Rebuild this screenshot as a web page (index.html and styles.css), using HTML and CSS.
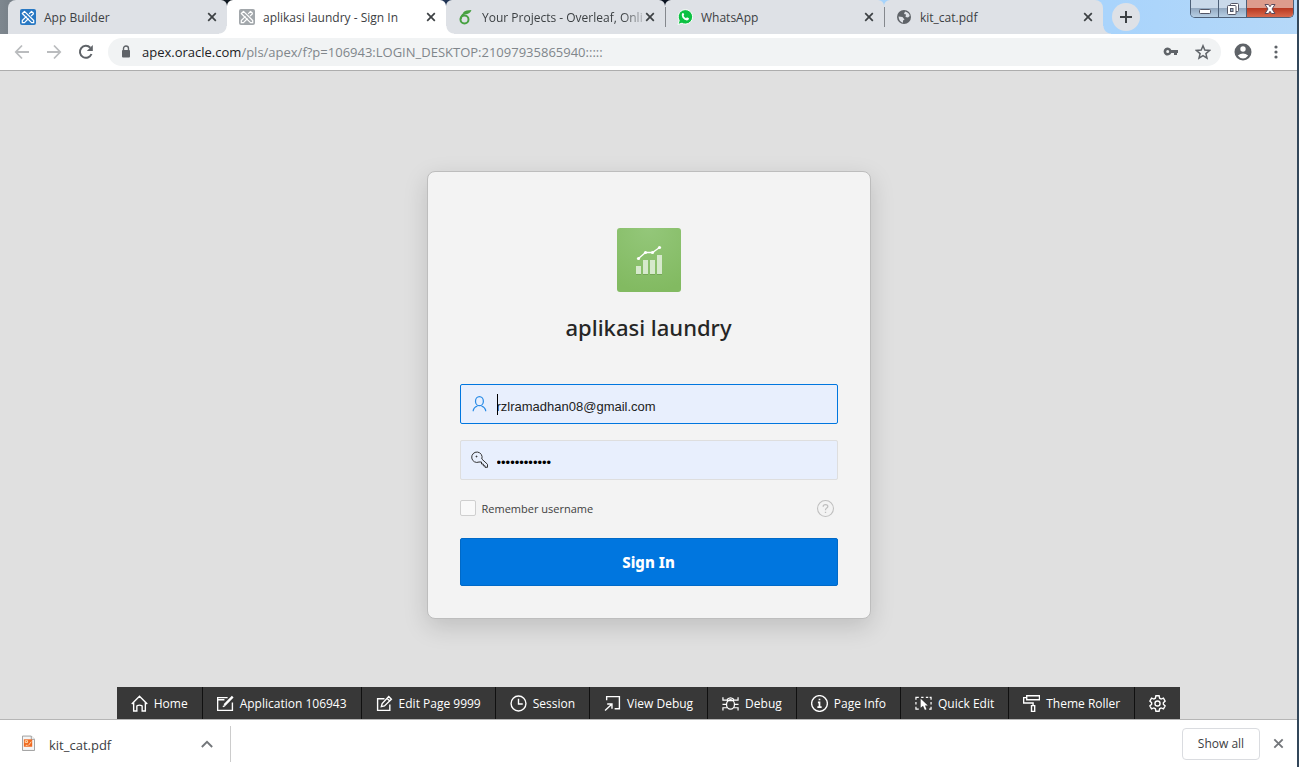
FILE: index.html
```html
<!DOCTYPE html>
<html lang="en">
<head>
<meta charset="utf-8">
<title>aplikasi laundry - Sign In</title>
<link rel="stylesheet" href="styles.css">
</head>
<body>
<svg class="defs" aria-hidden="true">
  <symbol id="apex" viewBox="0 0 16 16"><rect width="16" height="16" rx="2"/><g fill="none" stroke="#fff" stroke-width="1.2" stroke-linejoin="round"><path d="M2.300 4.500 4.500 2.300 13.700 11.500V13.700H11.500Z"/><path d="M13.700 4.500 11.500 2.300 9.200 4.800M6.500 7.300 2.300 11.500V13.700H4.500L8.500 9.500M11 7.200 13.700 4.500"/></g></symbol>
  <symbol id="close" viewBox="0 0 10 10"><path d="M1.200 1.200 8.800 8.800M8.800 1.200 1.200 8.800" fill="none" stroke="currentColor" stroke-width="1.700"/></symbol>
</svg>
<header class="tabstrip">
  <div class="tab tab-first"><svg class="favicon blue"><use href="#apex"/></svg><span class="tab-label">App Builder</span><button class="tab-close" aria-label="Close App Builder"><svg><use href="#close"/></svg></button></div>
  <div class="tab active"><svg class="favicon gray"><use href="#apex"/></svg><span class="tab-label">aplikasi laundry - Sign In</span><button class="tab-close" aria-label="Close aplikasi laundry"><svg><use href="#close"/></svg></button></div>
  <div class="tab"><svg class="favicon" viewBox="0 0 16 16" fill="none" stroke="#47a141"><circle cx="6.500" cy="10.500" r="4" stroke-width="2"/><path d="M2.700 10C3 6.500 6 4 9 3.400" stroke-width="2"/><path d="M5 3.800C7 1.200 10 1.200 13.500 1 12.500 4.500 9 5.500 6.500 5.200Z" fill="#47a141" stroke="none"/></svg><span class="tab-label fade">Your Projects - Overleaf, Onli</span><button class="tab-close" aria-label="Close Your Projects"><svg><use href="#close"/></svg></button></div>
  <div class="tab divided"><svg class="favicon" viewBox="0 0 16 16"><path d="M1 15.500 2.200 11.500A7.200 7.200 0 1 1 5 14.200Z" fill="#0dc143" stroke="#fff"/><path d="M5.200 4.200Q6.300 3.400 6.800 4.600L7.200 5.700 6.500 6.800Q7.300 8.500 9 9.300L10 8.300 12 9.300Q12 11.200 10 11.500 7.500 11.300 5.500 8.800 3.800 6.300 5.200 4.200Z" fill="#fff"/></svg><span class="tab-label">WhatsApp</span><button class="tab-close" aria-label="Close WhatsApp"><svg><use href="#close"/></svg></button></div>
  <div class="tab divided tab-last"><svg class="favicon" viewBox="0 0 16 16"><circle cx="8" cy="8" r="7" fill="#5f6368"/><path d="M2.500 7.500 6.500 8 8.500 10.500 7 11.500 7 13.700Q3 12.800 2.500 7.500ZM9 2.500 8 5 10 5.500 9.500 8 12 8.500 13.700 7Q13.500 3.500 9 2.500Z" fill="#dee1e6"/></svg><span class="tab-label">kit_cat.pdf</span><button class="tab-close" aria-label="Close kit_cat.pdf"><svg><use href="#close"/></svg></button></div>
  <button class="new-tab" aria-label="New tab"><svg viewBox="0 0 12 12"><path d="M6 0V12M0 6H12" stroke="#3c4043" stroke-width="2"/></svg></button>
  <div class="window-buttons">
    <button class="win" aria-label="Minimize"><svg viewBox="0 0 14 14"><rect x="1.500" y="7.500" width="11" height="4" rx="1" fill="#fff" stroke="#535666"/></svg></button>
    <button class="win" aria-label="Restore"><svg viewBox="0 0 14 14"><g fill="#fff" stroke="#535666"><rect x="4.500" y="1.500" width="8" height="8" rx="1"/><rect x="1.500" y="3.500" width="8.500" height="9" rx="1"/><rect x="4.500" y="6.500" width="2.500" height="3" fill="#9bb4cc"/></g></svg></button>
    <button class="win win-close" aria-label="Close window"><svg viewBox="0 0 14 14"><path d="M2 2.500H5.500L7 4.700 8.500 2.500H12L9 7 12 11.500H8.500L7 9.300 5.500 11.500H2L5 7Z" fill="#fff" stroke="#5b4a5c"/></svg></button>
  </div>
</header>
<nav class="toolbar" aria-label="Browser">
  <button class="tool" aria-label="Back"><svg viewBox="0 0 16 16" fill="none" stroke="#babcbe" stroke-width="1.800"><path d="M15 8H2M8 1.500 1.800 8 8 14.500"/></svg></button>
  <button class="tool" aria-label="Forward"><svg viewBox="0 0 16 16" fill="none" stroke="#babcbe" stroke-width="1.800"><path d="M1 8H14M8 1.500 14.200 8 8 14.500"/></svg></button>
  <button class="tool" aria-label="Reload"><svg viewBox="0 0 16 16"><path d="M13.500 10A6 6 0 1 1 12.300 3.700" fill="none" stroke="#5f6368" stroke-width="2"/><path d="M14.800 1V7H8.800Z" fill="#5f6368"/></svg></button>
  <div class="omnibox">
    <svg class="lock" viewBox="0 0 10 14"><path d="M2.500 6V3.500A2.500 2.500 0 0 1 7.500 3.500V6" fill="none" stroke="#5f6368" stroke-width="1.400"/><rect x="1" y="5" width="8" height="7.500" rx="1" fill="#5f6368"/></svg>
    <a class="url" href="#"><span class="host">apex.oracle.com</span>/pls/apex/f?p=106943:LOGIN_DESKTOP:21097935865940:::::</a>
    <button class="tool" aria-label="Passwords"><svg viewBox="0 0 16 16" fill="#5f6368"><path fill-rule="evenodd" d="M8.300 6A4 4 0 1 0 8.300 9H11V11H14V9H15V6ZM4.700 6A1.500 1.500 0 1 1 4.700 9 1.500 1.500 0 0 1 4.700 6Z"/></svg></button>
    <button class="tool" aria-label="Bookmark"><svg viewBox="0 0 16 16"><path d="M8 1.800 9.800 6.100 14.500 6.500 10.900 9.600 12 14.100 8 11.700 4 14.100 5.100 9.600 1.500 6.500 6.200 6.100Z" fill="none" stroke="#5f6368" stroke-width="1.500"/></svg></button>
  </div>
  <button class="tool account" aria-label="Account"><svg viewBox="0 0 18 18"><circle cx="9" cy="9" r="8.500" fill="#5f6368"/><circle cx="9" cy="6" r="2.700" fill="#fff"/><path d="M3.800 12.500Q9 8.300 14.200 12.500 12 15.500 9 15.500 6 15.500 3.800 12.500Z" fill="#fff"/></svg></button>
  <button class="tool" aria-label="Menu"><svg viewBox="0 0 16 16" fill="#5f6368"><circle cx="8" cy="3" r="1.600"/><circle cx="8" cy="8" r="1.600"/><circle cx="8" cy="13" r="1.600"/></svg></button>
</nav>
<main class="page">
  <form class="card">
    <svg class="logo" viewBox="0 0 64 64"><defs><radialGradient id="green" cx=".5" cy="0" r="1"><stop offset="0" stop-color="#94c77a"/><stop offset="1" stop-color="#82ba61"/></radialGradient></defs><rect width="64" height="64" rx="3" fill="url(#green)"/><path d="M19 46.500H24M26 46.500H31M33 46.500H38M40 46.500H45" stroke="#75a757"/><path d="M19 38H24V46H19ZM26 32H31V46H26ZM33 32H38V46H33ZM40 27H45V46H40Z" fill="#d6e9cc"/><path d="M21.500 30.500 28.500 24.500H35.500L42.500 19.500" fill="none" stroke="#fff" stroke-width="1.300"/><g fill="#fff"><circle cx="21.500" cy="30.500" r="1.600"/><circle cx="28.500" cy="24.500" r="1.600"/><circle cx="35.500" cy="24.500" r="1.600"/><circle cx="42.500" cy="19.500" r="1.600"/></g></svg>
    <h1>aplikasi laundry</h1>
    <label class="field focused"><svg viewBox="0 0 16 16" fill="none" stroke="currentColor" stroke-width="1.100"><ellipse cx="7.500" cy="5.500" rx="3.500" ry="4"/><path d="M2 14.500V13.500Q2.500 11 5.700 9.800M13 14.500V13.500Q12.500 11 9.300 9.800"/></svg><input type="text" aria-label="Username" value="rzlramadhan08@gmail.com"><span class="caret"></span></label>
    <label class="field"><svg viewBox="0 0 18 18" fill="none" stroke="currentColor"><path d="M8 11A5.200 5.200 0 1 1 10.800 8L16.500 13.300V16.300H14V14.800H12.300V13H10.500V11Z"/><circle cx="5.500" cy="5.500" r=".5" fill="currentColor"/></svg><input type="password" aria-label="Password" value="abcdefghijkl"></label>
    <div class="remember"><input type="checkbox" id="remember"><label for="remember">Remember username</label><button type="button" class="help" aria-label="Help"><svg viewBox="0 0 16 16" fill="none" stroke="#bfbfbf"><circle cx="8" cy="8" r="7.500"/><path d="M5.800 6.300Q5.800 4.400 8 4.400 10.200 4.400 10.200 6.200 10.200 7.200 8.900 7.800 8 8.300 8 9.700M8 11V12.300" stroke-width="1.200"/></svg></button></div>
    <button type="button" class="signin">Sign In</button>
  </form>
  <div class="devbar">
    <button><svg viewBox="0 0 16 16"><path d="M.7 8.500 8 1.200 15.300 8.500M2.500 7V15H5.500V10.500Q5.500 9.500 8 9.500 10.500 9.500 10.500 10.500V15H13.500V7"/></svg>Home</button>
    <button><svg viewBox="0 0 16 16"><path d="M10 2.500H.6V14.500H14.500V7M.6 4.500H7"/><path d="M14.800 1.500 7 9.500" stroke-width="2.200"/><path d="M5.500 11 7.500 10"/></svg>Application 106943</button>
    <button><svg viewBox="0 0 16 16"><path d="M8 3.500H1.500V14.500H13V9M5 11 5.800 8 12 1.500 14.500 4 8 10.300ZM10.500 3.200 13 5.600"/></svg>Edit Page 9999</button>
    <button><svg viewBox="0 0 16 16"><circle cx="8" cy="8" r="7"/><path d="M8 3.500V8.500H12"/></svg>Session</button>
    <button><svg viewBox="0 0 16 16"><path d="M2.500 5V1.500H14.500V13H10M1 14.500 7.500 8.500M3 8.500H7.500V13"/></svg>View Debug</button>
    <button><svg viewBox="0 0 18 16"><ellipse cx="9" cy="9" rx="4.200" ry="5"/><path d="M5.700 5V3.500Q9 .5 12.300 3.500V5ZM1 1.500V4.500H5M17 1.500V4.500H13M.5 9H4.500M17.500 9H13.500M1 15.500V12.500H5.500M17 15.500V12.500H12.500"/></svg>Debug</button>
    <button><svg viewBox="0 0 16 16"><circle cx="8" cy="8" r="7.400"/><path d="M8 3.500V5M6.500 7H8V11.500M6 11.500H10" stroke-width="1.600"/></svg>Page Info</button>
    <button><svg viewBox="0 0 18 16"><path d="M1 4V1.500H4M6.500 1.500H9M11.500 1.500H14M15.500 1.500H17V4M17 6.500V9M17 11.500V14H15M1 6.500V9M1 11.500V14H4"/><path d="M6 3V12.500L8.500 10.500 10.500 15 12.200 14.200 10.500 10H13.500Z" fill="#fff" stroke="none"/></svg>Quick Edit</button>
    <button><svg viewBox="0 0 16 16"><path d="M3.500.7H15.500V4.500H3.500ZM3.500 2.500H.6V7.500H9.500V10M8 10H11V15.400H8Z"/></svg>Theme Roller</button>
    <button aria-label="Settings"><svg viewBox="0 0 16 16"><path d="M6.500.7H9.500L10 3 11.400 3.800 13.600 3 15.200 5.700 13.500 7.300V8.700L15.200 10.300 13.600 13 11.400 12.200 10 13 9.500 15.300H6.500L6 13 4.600 12.200 2.400 13 .8 10.300 2.500 8.700V7.300L.8 5.700 2.400 3 4.600 3.800 6 3Z"/><circle cx="8" cy="8" r="2.400"/></svg></button>
  </div>
</main>
<footer class="downloads">
  <button class="download"><svg class="file" viewBox="0 0 14 17"><path d="M.5.500H10L13.500 4V16H.5Z" fill="#f5f5f5" stroke="#999"/><path d="M10 .5V4H13.500" fill="#fff" stroke="#999"/><rect x="2" y="4" width="9" height="8" fill="#f06a22"/><path d="M3.500 5.500H6V7.500H3.500ZM7 10.500 10 6.500M4 10.500H6" stroke="#ffe1b5" fill="none"/></svg><span>kit_cat.pdf</span><svg class="chevron" viewBox="0 0 10 10"><path d="M.7 7.500 5 3.200 9.300 7.500" fill="none" stroke="#73767a" stroke-width="1.600"/></svg></button>
  <button class="show-all">Show all</button>
  <button class="dismiss" aria-label="Close downloads"><svg><use href="#close"/></svg></button>
</footer>
</body>
</html>
```
FILE: styles.css
```css
* { box-sizing: border-box; }
body {
  margin: 0;
  min-height: 100vh;
  display: flex;
  flex-direction: column;
  border-right: 2px solid #33475a;
  background: #fff;
  font-family: "Open Sans", "Noto Sans", sans-serif;
  font-size: 12px;
  color: #3c4043;
}
button { font: inherit; color: inherit; border: 0; background: none; padding: 0; }
svg { display: block; flex: none; }
.defs { position: absolute; width: 0; height: 0; }

.tabstrip {
  display: flex;
  height: 34px;
  padding-left: 8px;
  background: linear-gradient(90deg, #7e878f 0, #79828a 8px, #101820 200px, #101820 240px, #1f3354 447px, #0b1220 600px, #0b1220 680px, #a6d3fb 860px, #a9d4fc 1110px, #b5d8f8);
}
.tab {
  position: relative;
  flex: 0 1 219px;
  min-width: 0;
  display: flex;
  align-items: center;
  padding: 0 10px 0 12px;
  border-radius: 6px 6px 0 0;
  background: #dee1e6;
}
.tab-first { border-top-left-radius: 8px; }
.tab-last { border-top-right-radius: 8px; }
.tab.active { background: #fff; z-index: 1; }
.tab.active::before, .tab.active::after, .tab-last::after {
  content: "";
  position: absolute;
  bottom: 0;
  width: 8px;
  height: 8px;
}
.tab.active::before { left: -8px; background: radial-gradient(circle at 0 0, #dee1e6 7px, #fff 8px); }
.tab.active::after { right: -8px; background: radial-gradient(circle at 100% 0, #dee1e6 7px, #fff 8px); }
.tab-last::after { right: -8px; background: radial-gradient(circle at 100% 0, transparent 7px, #dee1e6 8px); }
.divided::before {
  content: "";
  position: absolute;
  left: 0;
  top: 7px;
  width: 1px;
  height: 20px;
  background: #85888d;
}
.favicon { width: 16px; height: 16px; margin-right: 8px; }
.blue { fill: #2878c3; }
.gray { fill: #a2a7ab; }
.tab-label { flex: 1; min-width: 0; white-space: nowrap; }
.fade { -webkit-mask-image: linear-gradient(90deg, #000 86%, rgba(0, 0, 0, .2)); mask-image: linear-gradient(90deg, #000 86%, rgba(0, 0, 0, .2)); }
.tab-close svg { width: 10px; height: 10px; }
.new-tab {
  display: grid;
  place-items: center;
  flex: none;
  width: 28px;
  height: 28px;
  margin: 3px 0 0 9px;
  border-radius: 50%;
  background: #dee1e6;
}
.new-tab svg { width: 12px; height: 12px; }
.window-buttons {
  display: flex;
  flex: none;
  height: 18px;
  margin: 0 3px 0 auto;
  border: 1px solid #4d6078;
  border-top: 0;
  border-radius: 0 0 5px 5px;
  overflow: hidden;
}
.win {
  display: grid;
  place-items: center;
  width: 28px;
  background: linear-gradient(#c9d9ea 50%, #93a9c1 50%, #b7cfe4);
  border-right: 1px solid #4d6078;
}
.win svg { width: 14px; height: 14px; }
.win-close { width: 46px; border: 0; background: linear-gradient(#dd9c8c 45%, #b93a22 50%, #d9694d); }

.toolbar {
  display: flex;
  align-items: center;
  gap: 16px;
  height: 37px;
  padding: 0 13px 0 14px;
  border-bottom: 1px solid #adadad;
}
.tool { flex: none; }
.tool svg { width: 16px; height: 16px; }
.account svg { width: 18px; height: 18px; }
.omnibox {
  flex: 1;
  min-width: 0;
  display: flex;
  align-items: center;
  gap: 16px;
  height: 28px;
  margin: 0 -3px 0 -2px;
  padding: 0 10px 0 12px;
  border-radius: 14px;
  background: #f1f3f4;
  font-size: 13px;
}
.lock { width: 12px; height: 14px; margin-right: -6px; }
.url { flex: 1; min-width: 0; overflow: hidden; white-space: nowrap; color: #80868b; text-decoration: none; }
.host { color: #202124; }

.page {
  position: relative;
  flex: 1;
  display: flex;
  flex-direction: column;
  align-items: center;
  justify-content: center;
  background: #e0e0e0;
}
.card {
  display: flex;
  flex-direction: column;
  width: 444px;
  max-width: 100%;
  padding: 56px 32px 32px;
  border: 1px solid #bdbdbd;
  border-radius: 8px;
  background: #f3f3f3;
  box-shadow: 0 8px 24px rgba(0, 0, 0, .15);
}
.logo { width: 64px; height: 64px; align-self: center; }
h1 { margin: 19px 0 41px; font-family: "Noto Sans", "Open Sans", sans-serif; font-size: 22px; line-height: 32px; font-weight: 500; text-align: center; color: #262626; }
.field {
  position: relative;
  display: flex;
  align-items: center;
  height: 40px;
  margin-bottom: 16px;
  padding-left: 10px;
  border: 1px solid #dedede;
  border-radius: 2px;
  background: #e8effd;
  color: #333;
}
.field.focused { border-color: #0076df; color: #2a8ce6; }
.field svg { width: 18px; height: 18px; }
.field input {
  flex: 1;
  min-width: 0;
  height: 38px;
  margin-left: 8px;
  padding: 4px 0 0;
  border: 0;
  outline: 0;
  background: none;
  font-family: "Liberation Sans", Arial, sans-serif;
  font-size: 13px;
  color: #222;
}
.field input[type="password"] { color: #000; }
.caret { position: absolute; left: 36px; top: 9px; width: 1px; height: 21px; background: #000; }
.remember { display: flex; align-items: center; height: 24px; }
.remember input {
  appearance: none;
  width: 16px;
  height: 16px;
  margin: 0 6px 0 0;
  border: 1px solid #cfcfcf;
  border-radius: 2px;
  background: #f9f9f9;
}
.remember label { flex: 1; font-size: 11px; color: #404040; }
.help { margin-right: 4px; }
.help svg { width: 17px; height: 17px; }
.signin {
  height: 48px;
  margin-top: 18px;
  border: 1px solid #0069c7;
  border-radius: 2px;
  background: #0076df;
  color: #fff;
  font-family: "Noto Sans", "Open Sans", sans-serif;
  font-size: 15px;
  font-weight: 800;
}
.devbar {
  position: absolute;
  bottom: 0;
  display: flex;
  height: 32px;
  background: #383838;
  color: #fff;
}
.devbar button {
  display: flex;
  align-items: center;
  gap: 6px;
  padding: 0 14px;
  border-right: 1px solid #101010;
  white-space: nowrap;
}
.devbar button:last-child { border: 0; }
.devbar svg { width: 17px; height: 17px; fill: none; stroke: #fff; stroke-width: 1.3; }

.downloads {
  display: flex;
  align-items: center;
  height: 48px;
  padding: 0 13px 0 0;
  border-top: 1px solid #b6b6b6;
}
.download {
  display: flex;
  align-items: center;
  width: 231px;
  height: 36px;
  padding: 0 17px 0 22px;
  border-right: 1px solid #ccc;
  font-size: 13px;
}
.download span { flex: 1; margin-left: 14px; padding-top: 3px; text-align: left; }
.file { width: 13px; height: 17px; }
.chevron { width: 12px; height: 12px; }
.show-all { width: 78px; height: 32px; margin-left: auto; border: 1px solid #dadce0; border-radius: 4px; }
.dismiss { margin-left: 13px; color: #73767a; }
.dismiss svg { width: 11px; height: 11px; }
```
